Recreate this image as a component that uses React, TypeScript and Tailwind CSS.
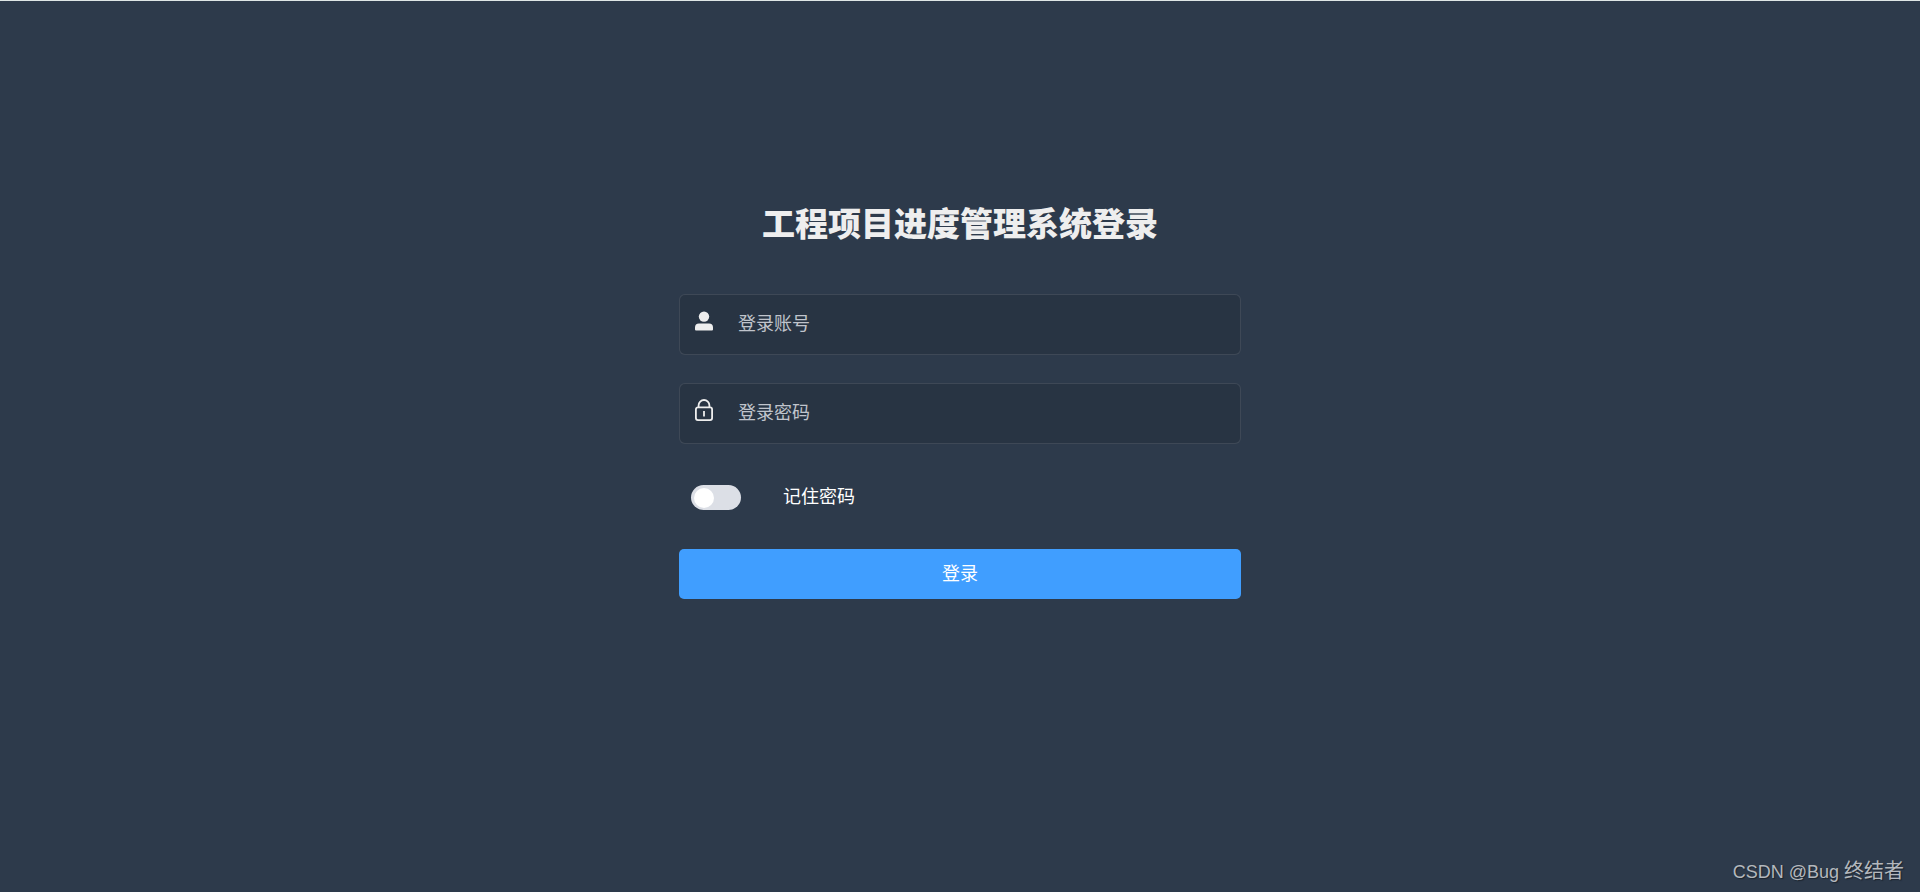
import { useState, type FormEvent, type ReactNode } from "react";

function UserIcon() {
  return (
    <svg width="18" height="20" viewBox="0 0 18 20" fill="#eeeeee" aria-hidden="true">
      <circle cx="9" cy="5.6" r="5.2" />
      <path d="M4 12.5h10a4 4 0 0 1 4 4V18.4a1 1 0 0 1-1 1H1a1 1 0 0 1-1-1V16.5a4 4 0 0 1 4-4Z" />
    </svg>
  );
}

function LockIcon() {
  return (
    <svg width="18" height="22" viewBox="0 0 18 22" fill="none" stroke="#eeeeee" aria-hidden="true">
      <rect x="0.9" y="8.4" width="16.2" height="12.7" rx="2" strokeWidth="1.8" />
      <path d="M3.6 8.4V6.2a5.4 5.2 0 0 1 10.8 0v2.2" strokeWidth="1.8" />
      <path d="M9 12v5.4" strokeWidth="1.8" />
    </svg>
  );
}

type FieldProps = {
  id: string;
  label: string;
  type: string;
  icon: ReactNode;
  value: string;
  onChange: (value: string) => void;
};

function Field({ id, label, type, icon, value, onChange }: FieldProps) {
  return (
    <div className="flex h-[61px] items-center rounded-[6px] border border-white/10 bg-black/10 pl-[15px]">
      <label htmlFor={id} aria-label={label} className="flex w-[43px] shrink-0 pb-[7px]">
        {icon}
      </label>
      <input
        id={id}
        type={type}
        placeholder={label}
        value={value}
        onChange={(e) => onChange(e.target.value)}
        className="h-full min-w-0 flex-1 bg-transparent pr-4 pb-[6px] text-[18px] text-white outline-none placeholder:text-[#c0c4cc]"
      />
    </div>
  );
}

export default function App() {
  const [account, setAccount] = useState("");
  const [password, setPassword] = useState("");
  const [remember, setRemember] = useState(false);

  const submit = (e: FormEvent) => e.preventDefault();

  return (
    <div className="flex min-h-screen flex-col border-t border-[#dfe6e6] bg-[#2d3a4b] font-['Noto_Sans_CJK_SC',sans-serif]">
      <main className="flex flex-1 justify-center px-4 pt-[197px]">
        <form onSubmit={submit} className="w-full max-w-[562px]">
          <h1 className="mb-12 text-center text-[33px] leading-[48px] font-black text-[#eeeeee]">
            工程项目进度管理系统登录
          </h1>
          <div className="flex flex-col gap-7">
            <Field id="account" label="登录账号" type="text" icon={<UserIcon />} value={account} onChange={setAccount} />
            <Field id="password" label="登录密码" type="password" icon={<LockIcon />} value={password} onChange={setPassword} />
          </div>
          <div className="flex h-[105px] items-center gap-[42px] pt-[2px] pl-3">
            <input
              id="remember"
              type="checkbox"
              role="switch"
              checked={remember}
              onChange={(e) => setRemember(e.target.checked)}
              className="flex h-[25px] w-[50px] cursor-pointer appearance-none items-center rounded-full bg-[#dcdfe6] px-[3px] before:size-5 before:rounded-full before:bg-white before:transition-transform before:content-[''] checked:bg-[#409eff] checked:before:translate-x-6"
            />
            <label htmlFor="remember" className="cursor-pointer pb-[6px] text-[18px] leading-6 text-white">
              记住密码
            </label>
          </div>
          <button type="submit" className="h-[50px] w-full cursor-pointer rounded-[5px] bg-[#409eff] pb-1 text-[18px] leading-6 text-white">
            登录
          </button>
        </form>
      </main>
      <footer className="flex items-baseline justify-end px-4 pb-2 text-[20px] leading-6 text-[#b4b8bd] [text-shadow:1px_1px_1px_#1b232d]">
        <span className="font-['Liberation_Sans',sans-serif] text-[18px] whitespace-pre">CSDN @Bug </span>
        <span>终结者</span>
      </footer>
    </div>
  );
}
